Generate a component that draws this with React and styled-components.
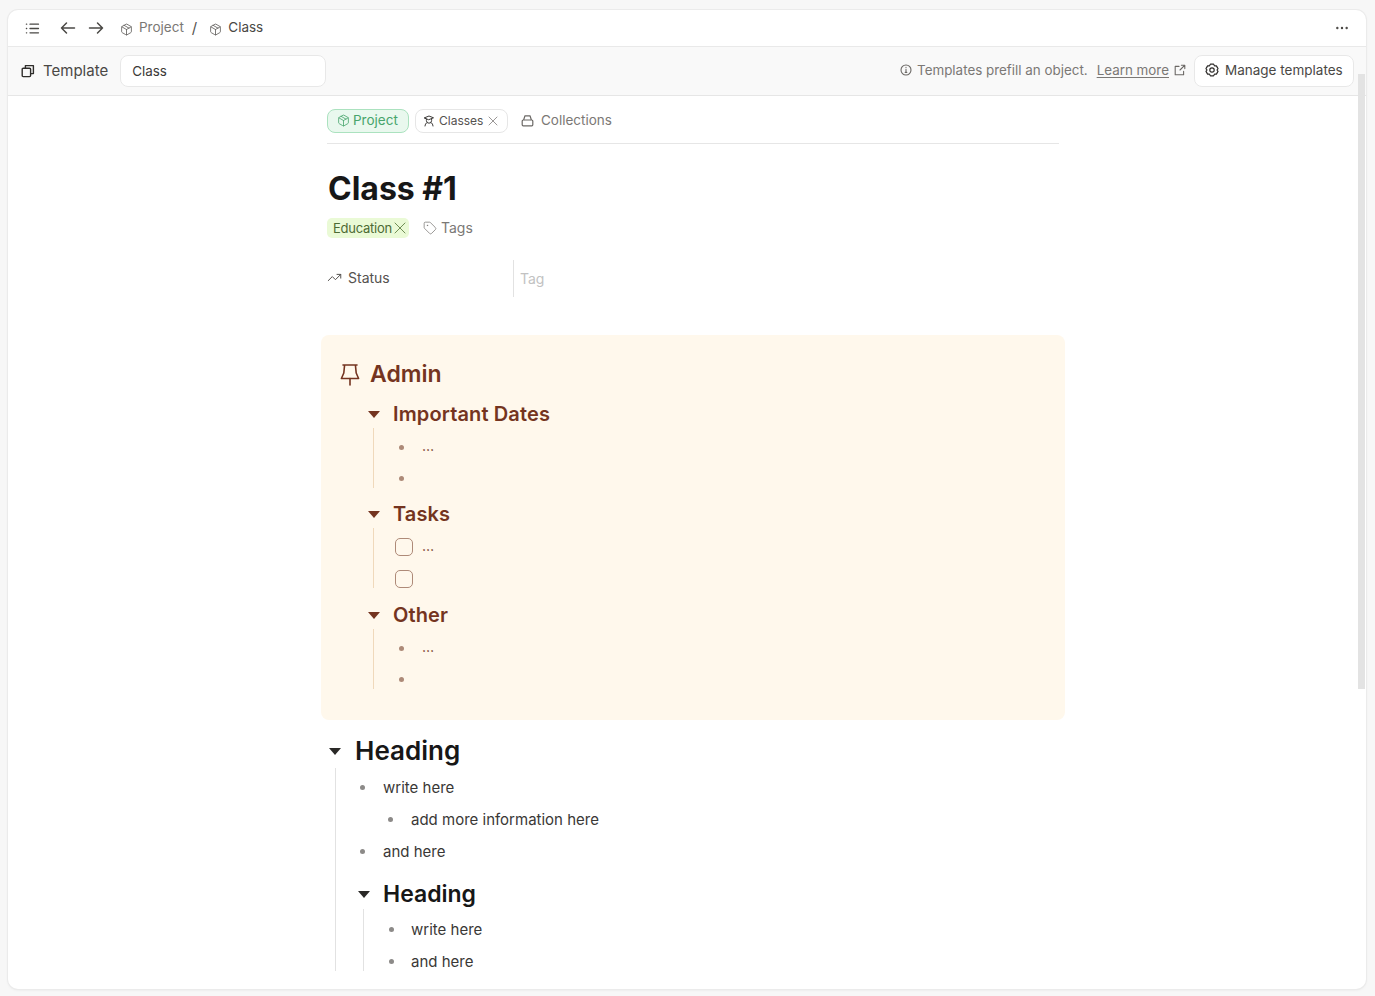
import React from 'react';
import styled, { createGlobalStyle } from 'styled-components';
import { Package, X, Tag, TrendingUp, Ellipsis } from 'lucide-react';

const Global = createGlobalStyle`
  html, body { margin: 0; padding: 0; height: 100%; background: #f7f7f7; overflow: hidden; }
  body { font-family: Inter, "Noto Sans", sans-serif; color: #1a1a1a; }
  * { box-sizing: border-box; }
`;

const Page = styled.div`
  height: 996px;
  padding: 10px 9px 6px 8px;
`;
const Win = styled.div`
  position: relative;
  height: 979px;
  background: #fff;
  border-radius: 10px;
  box-shadow: 0 0 0 1px #ebebeb, 0 1px 3px rgba(0,0,0,.08);
  overflow: hidden;
  display: flex;
  flex-direction: column;
`;
const TopBar = styled.header`
  height: 37px;
  flex: none;
  display: flex;
  align-items: center;
  padding: 0 17px;
  border-bottom: 1px solid #e9e9e9;
  font-size: 13.5px;
  color: #55524f;
`;
const TopIcon = styled.span`
  display: inline-flex;
  color: #4a4845;
  margin-right: ${p => p.$mr}px;
`;
const Crumb = styled.span`
  display: inline-flex;
  align-items: center;
  gap: 6px;
  color: ${p => p.$dark ? '#4a4845' : '#7b7875'};
`;
const CrumbIcon = styled.span`
  display: inline-flex;
  margin-top: 2px;
  color: #5c5a57;
`;
const CrumbText = styled.span`
  margin-top: -2px;
`;
const Slash = styled.span`
  margin: -1px 12px 0 8px;
  color: #55524f;
  font-size: 15px;
`;
const More = styled.span`
  margin-left: auto;
  display: inline-flex;
  margin-right: -1px;
  color: #4a4845;
`;
const TemplateBar = styled.div`
  height: 49px;
  flex: none;
  display: flex;
  align-items: center;
  padding: 0 12px 1px 13px;
  background: #f9f9f9;
  border-bottom: 1px solid #e6e6e6;
`;
const TemplateLabel = styled.span`
  display: inline-flex;
  align-items: center;
  gap: 8px;
  color: #4a4845;
  font-size: 15px;
  margin-right: 12px;
`;
const ClassField = styled.div`
  width: 206px;
  height: 32px;
  background: #fff;
  border: 1px solid #e8e8e8;
  border-radius: 8px;
  display: flex;
  align-items: center;
  padding-left: 11px;
  font-size: 13.4px;
  color: #3c3a38;
`;
const Hint = styled.span`
  margin-left: auto;
  display: inline-flex;
  align-items: center;
  color: #7b7875;
  font-size: 13.4px;
  padding-bottom: 2px;
`;
const HintText = styled.span`
  margin-left: 5px;
  margin-right: 9px;
`;
const LearnLink = styled.a`
  color: #7b7875;
  text-decoration: underline;
  text-underline-offset: 2px;
  margin-right: 5px;
`;
const ManageBtn = styled.button`
  margin-left: 8px;
  height: 32px;
  width: 160px;
  background: #fff;
  border: 1px solid #e8e8e8;
  border-radius: 8px;
  display: flex;
  align-items: center;
  gap: 6px;
  padding: 0 0 2px 10px;
  font: 13.5px Inter, sans-serif;
  color: #4a4845;
`;
const Scrollbar = styled.div`
  position: absolute;
  left: 1350px;
  top: 64px;
  width: 7px;
  height: 615px;
  background: #e3e3e3;
`;
const Column = styled.main`
  width: 744px;
  margin-left: 313px;
  flex: 1;
  overflow: hidden;
`;
const Meta = styled.div`
  margin: 0 6px;
`;
const Tabs = styled.div`
  height: 48px;
  padding-top: 13px;
  display: flex;
  align-items: flex-start;
  gap: 6px;
  border-bottom: 1px solid #e6e6e6;
`;
const ProjectPill = styled.span`
  height: 24px;
  width: 82px;
  display: inline-flex;
  align-items: center;
  gap: 3px;
  padding: 0 0 2px 9px;
  border: 1px solid #abe2bf;
  background: #e9f8ee;
  border-radius: 8px;
  color: #48a56c;
  font-size: 13.5px;
`;
const ClassPill = styled.span`
  height: 24px;
  width: 93px;
  display: inline-flex;
  align-items: center;
  gap: 4px;
  padding: 0 0 1px 7px;
  border: 1px solid #e6e6e6;
  border-radius: 8px;
  color: #55524f;
  font-size: 12px;
`;
const ClassClose = styled.span`
  display: inline-flex;
  margin-left: -2px;
  color: #8a8785;
`;
const Plain = styled.span`
  display: inline-flex;
  align-items: center;
  gap: 7px;
  margin-left: 7px;
  height: 24px;
  padding-bottom: 2px;
  color: #7b7875;
  font-size: 13.5px;
`;
const Title = styled.h1`
  margin: 27px 0 0;
  padding-left: 1px;
  font-size: 32px;
  line-height: 36px;
  font-weight: 700;
  color: #171717;
`;
const TagRow = styled.div`
  margin-top: 11px;
  height: 20px;
  display: flex;
  align-items: center;
`;
const EduTag = styled.span`
  height: 20px;
  width: 82px;
  flex: none;
  display: inline-flex;
  align-items: center;
  padding-left: 6px;
  background: #eafad6;
  border-radius: 5px;
  color: #4d6b34;
  font-size: 13px;
  letter-spacing: -.25px;
`;
const EduClose = styled.span`
  display: inline-flex;
  color: #6f8e54;
  margin-left: -2px;
`;
const TagsAdd = styled.span`
  display: inline-flex;
  align-items: center;
  gap: 4px;
  margin: -1px 0 0 14px;
  font-size: 14px;
  color: #7b7875;
`;
const StatusRow = styled.div`
  margin-top: 22px;
  height: 37px;
  display: flex;
`;
const StatusLabel = styled.div`
  width: 186px;
  display: flex;
  align-items: center;
  gap: 6px;
  font-size: 14px;
  color: #55524f;
  padding-bottom: 3px;
`;
const StatusValue = styled.div`
  flex: 1;
  border-left: 1px solid #e2e2e2;
  display: flex;
  align-items: center;
  padding: 0 0 1px 6px;
  font-size: 14px;
  color: #c2c2c2;
`;
const Callout = styled.section`
  margin-top: 38px;
  height: 385px;
  background: #fff8ec;
  border-radius: 8px;
  padding: 21px 0 0 19px;
  color: #743420;
`;
const CalloutHead = styled.div`
  display: flex;
  align-items: center;
  height: 36px;
  gap: 10px;
  font-size: 23px;
  font-weight: 600;
`;
const Group = styled.div`
  margin-left: ${p => p.$indent}px;
  margin-top: ${p => p.$top}px;
`;
const Toggle = styled.div`
  display: flex;
  align-items: center;
  height: ${p => p.$h}px;
  font-size: ${p => p.$size}px;
  font-weight: ${p => p.$weight};
  letter-spacing: ${p => p.$track || 0}px;
  color: ${p => p.$color};
`;
const HeadText = styled.span`
  margin-top: ${p => p.$lift || 0}px;
`;
const Arrow = styled.span`
  width: 0;
  height: 0;
  flex: none;
  margin-right: ${p => p.$right}px;
  border-left: 6.5px solid transparent;
  border-right: 6.5px solid transparent;
  border-top: 7px solid ${p => p.$color};
`;
const Children = styled.div`
  margin-left: ${p => p.$left}px;
  padding-left: ${p => p.$pad}px;
  border-left: 1px solid ${p => p.$line};
  padding-top: ${p => p.$top || 0}px;
  height: ${p => p.$h}px;
`;
const Row = styled.div`
  display: flex;
  align-items: center;
  height: ${p => p.$h || 32}px;
  font-size: 15px;
  color: ${p => p.$color};
  margin-left: ${p => p.$left || 0}px;
`;
const Placeholder = styled.span`
  font-size: 14px;
  margin-top: -3px;
`;
const Dot = styled.span`
  width: 5px;
  height: 5px;
  border-radius: 50%;
  flex: none;
  background: ${p => p.$color};
  margin-right: ${p => p.$gap}px;
`;
const Check = styled.span`
  width: 18px;
  height: 18px;
  flex: none;
  border: 1.3px solid #ae8a78;
  border-radius: 5px;
  margin-right: 9px;
  margin-left: -3px;
`;

const Cube = () => <Package size={13} strokeWidth={1.5} />;

const ListIcon = () => (
  <svg width="15" height="15" viewBox="0 0 15 15" fill="none" stroke="currentColor" strokeWidth="1.3" strokeLinecap="round">
    <path d="M5 3.2h8.5M5 7.5h8.5M5 11.8h8.5" />
    <path d="M1.4 3.2h.3M1.4 7.5h.3M1.4 11.8h.3" />
  </svg>
);
const BackIcon = () => (
  <svg width="16" height="16" viewBox="0 0 16 16" fill="none" stroke="currentColor" strokeWidth="1.5" strokeLinecap="round" strokeLinejoin="round">
    <path d="M14.5 8H1.5M6.5 3l-5 5 5 5" />
  </svg>
);
const ForwardIcon = () => (
  <svg width="16" height="16" viewBox="0 0 16 16" fill="none" stroke="currentColor" strokeWidth="1.5" strokeLinecap="round" strokeLinejoin="round">
    <path d="M1.5 8h13M9.5 3l5 5-5 5" />
  </svg>
);
const CopyIcon = () => (
  <svg width="14" height="14" viewBox="0 0 14 14" fill="none" stroke="#2f2d2b" strokeWidth="1.4" strokeLinejoin="round">
    <rect x="1.2" y="4.2" width="8.4" height="8.4" rx="1" />
    <path d="M4.4 4.2V1.6h8v8H9.6" />
  </svg>
);
const InfoIcon = () => (
  <svg width="12" height="12" viewBox="0 0 12 12" fill="none" stroke="#6b6865" strokeWidth="1.1" strokeLinecap="round">
    <circle cx="6" cy="6" r="5" />
    <path d="M6 5.4v3M5.2 8.4h1.6M6 3.4v.2" />
  </svg>
);
const ExternalIcon = () => (
  <svg width="12" height="12" viewBox="0 0 12 12" fill="none" stroke="#6b6865" strokeWidth="1.1" strokeLinecap="round" strokeLinejoin="round">
    <path d="M5 2.4H1.2v8.4h8.4V7.4" />
    <path d="M7.4 1.2h3.4v3.4M10.6 1.4 6 6" />
  </svg>
);
const GearIcon = () => (
  <svg width="14" height="14" viewBox="0 0 14 14" fill="none" stroke="#2f2d2b" strokeWidth="1.2" strokeLinejoin="round">
    <path d="M5.4 1.2h3.2l.9 1.6 1.9.1 1.6 2.7-1 1.4 1 1.4-1.6 2.7-1.9.1-.9 1.6H5.4l-.9-1.6-1.9-.1L1 8.4 2 7 1 5.6l1.6-2.7 1.9-.1z" />
    <circle cx="7" cy="7" r="2.2" />
  </svg>
);
const ClassIcon = () => (
  <svg width="12" height="12" viewBox="0 0 12 12" fill="none" stroke="#3c3a38" strokeWidth="1" strokeLinecap="round" strokeLinejoin="round">
    <path d="M1.5 2.8 6 1l4.5 1.8L6 4.6z" />
    <path d="M3.4 4v1.6a2.6 2.6 0 0 0 5.2 0V4M2 11c.2-1.8 1-3 2-3.4M10 11c-.2-1.8-1-3-2-3.4" />
  </svg>
);
const BagIcon = () => (
  <svg width="13" height="13" viewBox="0 0 13 13" fill="none" stroke="#6b6865" strokeWidth="1.2" strokeLinejoin="round">
    <rect x="1.2" y="6" width="10.6" height="5.8" rx="1" />
    <path d="M2.6 6 4 1.8h5L10.4 6" />
  </svg>
);
const PinIcon = () => (
  <svg width="20" height="24" viewBox="0 0 20 24" fill="none" stroke="#743420" strokeWidth="1.6" strokeLinecap="round" strokeLinejoin="round">
    <path d="M3 3h14M4.6 3 3.8 11 1.4 16.5h17.2L16.2 11 15.4 3" />
    <path d="M10 16.5V23" />
  </svg>
);

const CALLOUT = '#743420';
const LINE = '#f0d9bb';
const BULLET = '#ad8a78';
const DARK = '#3a3836';
const GREY = '#8c8a88';
const RULE = '#e2e2e2';

const SubHead = ({ children }) => (
  <Toggle $h={28} $size={20} $weight={600} $track={0.13} $color={CALLOUT}>
    <Arrow $right={13} $color={CALLOUT} />{children}
  </Toggle>
);

export default function App() {
  return (
    <Page>
      <Global />
      <Win>
        <TopBar>
          <TopIcon $mr={20}><ListIcon /></TopIcon>
          <TopIcon $mr={12}><BackIcon /></TopIcon>
          <TopIcon $mr={16}><ForwardIcon /></TopIcon>
          <Crumb><CrumbIcon><Cube /></CrumbIcon><CrumbText>Project</CrumbText></Crumb>
          <Slash>/</Slash>
          <Crumb $dark><CrumbIcon><Cube /></CrumbIcon><CrumbText>Class</CrumbText></Crumb>
          <More><Ellipsis size={16} strokeWidth={1.6} /></More>
        </TopBar>
        <TemplateBar>
          <TemplateLabel><CopyIcon />Template</TemplateLabel>
          <ClassField>Class</ClassField>
          <Hint>
            <InfoIcon />
            <HintText>Templates prefill an object.</HintText>
            <LearnLink>Learn more</LearnLink>
            <ExternalIcon />
          </Hint>
          <ManageBtn><GearIcon />Manage templates</ManageBtn>
        </TemplateBar>
        <Column>
          <Meta>
            <Tabs>
              <ProjectPill><Cube />Project</ProjectPill>
              <ClassPill><ClassIcon />Classes<ClassClose><X size={16} strokeWidth={1.3} /></ClassClose></ClassPill>
              <Plain><BagIcon />Collections</Plain>
            </Tabs>
            <Title>Class #1</Title>
            <TagRow>
              <EduTag>Education<EduClose><X size={20} strokeWidth={1.2} /></EduClose></EduTag>
              <TagsAdd><Tag size={14} strokeWidth={1.3} />Tags</TagsAdd>
            </TagRow>
            <StatusRow>
              <StatusLabel><TrendingUp size={15} strokeWidth={1.6} />Status</StatusLabel>
              <StatusValue>Tag</StatusValue>
            </StatusRow>
          </Meta>
          <Callout>
            <CalloutHead><PinIcon />Admin</CalloutHead>
            <Group $indent={28} $top={8}>
              <SubHead>Important Dates</SubHead>
              <Children $left={5} $pad={25} $line={LINE} $top={3} $h={60}>
                <Row $color={CALLOUT}><Dot $color={BULLET} $gap={18} /><Placeholder>…</Placeholder></Row>
                <Row $color={CALLOUT} $h={30}><Dot $color={BULLET} $gap={18} /></Row>
              </Children>
            </Group>
            <Group $indent={28} $top={12}>
              <SubHead>Tasks</SubHead>
              <Children $left={5} $pad={24} $line={LINE} $top={3} $h={60}>
                <Row $color={CALLOUT}><Check /><Placeholder>…</Placeholder></Row>
                <Row $color={CALLOUT}><Check /></Row>
              </Children>
            </Group>
            <Group $indent={28} $top={13}>
              <SubHead>Other</SubHead>
              <Children $left={5} $pad={25} $line={LINE} $top={3} $h={60}>
                <Row $color={CALLOUT}><Dot $color={BULLET} $gap={18} /><Placeholder>…</Placeholder></Row>
                <Row $color={CALLOUT} $h={30}><Dot $color={BULLET} $gap={18} /></Row>
              </Children>
            </Group>
          </Callout>
          <Group $indent={8} $top={14}>
            <Toggle $h={34} $size={26} $weight={600} $color="#171717">
              <Arrow $right={14} $color="#2a2927" /><HeadText $lift={-2}>Heading</HeadText>
            </Toggle>
            <Children $left={6} $pad={24} $line={RULE} $top={3} $h={203}>
              <Row $color={DARK}><Dot $color={GREY} $gap={18} />write here</Row>
              <Row $color={DARK} $left={28}><Dot $color={GREY} $gap={18} />add more information here</Row>
              <Row $color={DARK}><Dot $color={GREY} $gap={18} />and here</Row>
              <Group $indent={-2} $top={12}>
                <Toggle $h={30} $size={23} $weight={600} $color="#171717">
                  <Arrow $right={13} $color="#2a2927" /><HeadText>Heading</HeadText>
                </Toggle>
                <Children $left={5} $pad={25} $line={RULE} $top={4} $h={62}>
                  <Row $color={DARK}><Dot $color={GREY} $gap={17} />write here</Row>
                  <Row $color={DARK}><Dot $color={GREY} $gap={17} />and here</Row>
                </Children>
              </Group>
            </Children>
          </Group>
        </Column>
        <Scrollbar />
      </Win>
    </Page>
  );
}
